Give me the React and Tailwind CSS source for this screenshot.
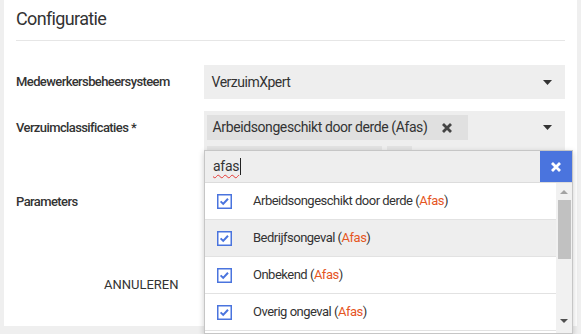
import React from "react";

const Caret = ({ color = "#333" }) => (
  <svg width="9" height="5" viewBox="0 0 9 5"><polygon points="0,0 9,0 4.5,5" fill={color} /></svg>
);

const Check = () => (
  <svg width="15" height="15" viewBox="0 0 15 15" className="shrink-0">
    <rect x="0.75" y="0.75" width="13.5" height="13.5" fill="white" stroke="#4a74de" strokeWidth="1.5" />
    <path d="M3.6 7.4 L6.2 9.9 L11 4.8" fill="none" stroke="#4a74de" strokeWidth="2" />
  </svg>
);

const Times = ({ size = 10, color = "#444", w = 2.6 }) => (
  <svg width={size} height={size} viewBox="0 0 10 10">
    <path d="M1 1 L9 9 M9 1 L1 9" stroke={color} strokeWidth={w} />
  </svg>
);

const Item = ({ name, hl }) => (
  <div className={`h-[37px] border-b border-[#e2e2e2] flex items-center pl-3 ${hl ? "bg-[#eeeeee]" : "bg-white"}`}>
    <Check />
    <span className="ml-[21px] text-[13px] tracking-[-0.5px] text-[#333]">
      {name} (<span className="text-[#e5561f]">Afas</span>)
    </span>
  </div>
);

export default function App() {
  return (
    <div className="w-[581px] h-[334px] overflow-hidden bg-[#efefef] pl-[4px] pr-[4px] font-['Roboto',sans-serif]">
      <div className="relative bg-white h-[326px] px-3">
        <div className="h-[41px] border-b border-[#e6e6e6] flex items-center">
          <span className="text-[18px] tracking-[-0.65px] text-[#333] leading-6 pb-[2px]">Configuratie</span>
        </div>

        <div className="mt-[24px] flex flex-col gap-3">
          <div className="flex">
            <div className="w-[189px] h-[34px] flex items-center text-[13px] tracking-[-0.6px] font-medium text-[#333]">Medewerkersbeheersysteem</div>
            <div className="w-[364px] h-[34px] bg-[#eeeeee] flex items-center pl-2 pr-[13px]">
              <span className="text-[14px] tracking-[-0.5px] text-[#333] flex-1">VerzuimXpert</span>
              <Caret />
            </div>
          </div>

          <div className="flex">
            <div className="w-[189px] h-[34px] flex items-center text-[13px] tracking-[-0.6px] font-medium text-[#333]">Verzuimclassificaties *</div>
            <div className="w-[364px] h-[62px] bg-[#eeeeee] flex pl-[3px] pt-[4px] pr-[13px]">
              <div className="flex-1 flex flex-col gap-[6px]">
                <div className="w-[261px] h-[25px] bg-[#e0e0e0] flex items-center pl-[6px]">
                  <span className="text-[14px] tracking-[-0.4px] text-[#333]">Arbeidsongeschikt door derde (Afas)</span>
                  <span className="ml-[15px] flex"><Times size={10} w={2.8} /></span>
                </div>
                <div className="flex gap-[5px]">
                  <div className="w-[175px] h-[25px] bg-[#e2e2e2]" />
                  <div className="w-[25px] h-[25px] bg-[#e2e2e2]" />
                </div>
              </div>
              <div className="h-[25px] flex items-center">
                <Caret />
              </div>
            </div>
          </div>

          <div className="flex">
            <div className="w-[189px] h-[34px] flex items-center text-[13px] tracking-[-0.6px] font-medium text-[#333]">Parameters</div>
          </div>
        </div>

        <div className="mt-[48px] flex">
          <button className="ml-[72px] px-4 h-9 text-[13px] text-[#333] uppercase">Annuleren</button>
        </div>

        <div className="absolute left-[200px] top-[150px] w-[369px] border border-[#c6c6c6] bg-white shadow-[0_2px_6px_rgba(0,0,0,0.2)]">
          <div className="flex h-[32px] border-b border-[#dcdcdc]">
            <div className="flex-1 bg-[#eeeeee] flex items-center pl-2">
              <span className="text-[14px] tracking-[-0.3px] text-[#333] underline decoration-wavy decoration-[#e53935] decoration-1 underline-offset-[3px]">afas</span>
              <span className="w-px h-[17px] bg-[#222] ml-[1px]" />
            </div>
            <div className="w-[32px] bg-[#4a74de] flex items-center justify-center">
              <Times size={10} color="white" w={2.8} />
            </div>
          </div>
          <div className="flex h-[150px] overflow-hidden">
            <div className="flex-1">
              <Item name="Arbeidsongeschikt door derde" />
              <Item name="Bedrijfsongeval" hl />
              <Item name="Onbekend" />
              <Item name="Overig ongeval" />
              <div className="h-[37px] bg-white" />
            </div>
            <div className="w-[16px] bg-[#f1f1f1] flex flex-col">
              <div className="h-[17px] flex items-center justify-center">
                <svg width="8" height="4" viewBox="0 0 8 4"><polygon points="0,4 8,4 4,0" fill="#a3a3a3" /></svg>
              </div>
              <div className="ml-[2px] mr-[1px] h-[59px] bg-[#c1c1c1]" />
              <div className="flex-1" />
              <div className="h-[20px] flex items-start pt-[6px] justify-center">
                <svg width="8" height="4" viewBox="0 0 8 4"><polygon points="0,0 8,0 4,4" fill="#505050" /></svg>
              </div>
            </div>
          </div>
        </div>
      </div>
    </div>
  );
}
